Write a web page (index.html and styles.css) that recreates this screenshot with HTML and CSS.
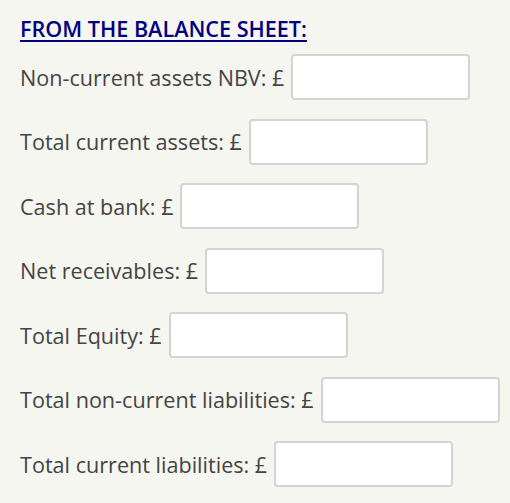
FILE: index.html
```html
<!DOCTYPE html>
<html lang="en">
<head>
    <meta charset="UTF-8">
    <meta name="viewport" content="width=device-width, initial-scale=1.0">
    <title>From the balance sheet</title>
    <link rel="stylesheet" href="styles.css">
</head>
<body>

    <div class="sheet">
        <h2 class="sheet-title">FROM THE BALANCE SHEET:</h2>

        <!-- Campos do balanço -->
        <div class="field">
            <label for="nbv">Non-current assets NBV: &pound;</label>
            <input type="text" id="nbv">
        </div>
        <div class="field">
            <label for="tca">Total current assets: &pound;</label>
            <input type="text" id="tca">
        </div>
        <div class="field">
            <label for="cash">Cash at bank: &pound;</label>
            <input type="text" id="cash">
        </div>
        <div class="field">
            <label for="recv">Net receivables: &pound;</label>
            <input type="text" id="recv">
        </div>
        <div class="field">
            <label for="equity">Total Equity: &pound;</label>
            <input type="text" id="equity">
        </div>
        <div class="field">
            <label for="tncl">Total non-current liabilities: &pound;</label>
            <input type="text" id="tncl">
        </div>
        <div class="field">
            <label for="tcl">Total current liabilities: &pound;</label>
            <input type="text" id="tcl">
        </div>
    </div>

</body>
</html>
```
FILE: styles.css
```css
body {
    margin: 0;
    background: #f6f6f1;
    font-family: "Open Sans", Arial, sans-serif;
    color: #444;
    overflow: hidden;
}

.sheet {
    padding: 14px 20px 0 20px;
}

.sheet-title {
    margin: 0 0 10px 0;
    font-size: 21.6px;
    font-weight: 600;
    line-height: 30px;
    color: #000080;
    text-decoration: underline;
    text-underline-offset: 3px;
}

.field {
    display: flex;
    align-items: center;
    margin-bottom: 18.5px;
    font-size: 21.6px;
    white-space: nowrap;
}

.field label {
    margin-right: 7px;
}

.field input {
    flex-shrink: 0;
    width: 179px;
    height: 46px;
    box-sizing: border-box;
    border: 2px solid #d4d4d4;
    border-radius: 4px;
    background: #fff;
    padding: 0 8px;
    font-size: 18px;
}
```
